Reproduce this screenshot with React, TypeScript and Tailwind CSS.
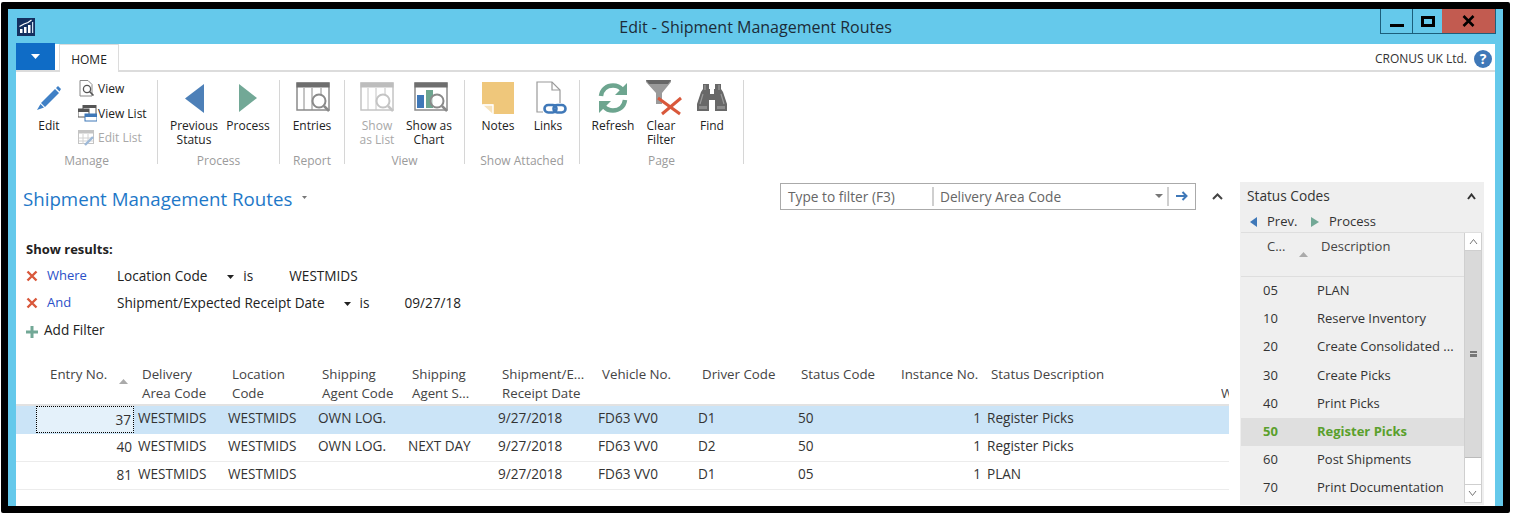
import type { ReactNode } from "react";

const font = { fontFamily: '"Open Sans", "Noto Sans", sans-serif' };

function Tri({ dir, color, w, h }: { dir: "l" | "r" | "d" | "u"; color: string; w: number; h: number }) {
  const pts = { l: `0,${h / 2} ${w},0 ${w},${h}`, r: `0,0 ${w},${h / 2} 0,${h}`, d: `0,0 ${w},0 ${w / 2},${h}`, u: `0,${h} ${w},${h} ${w / 2},0` }[dir];
  return (
    <svg width={w} height={h} viewBox={`0 0 ${w} ${h}`} className="shrink-0">
      <polygon points={pts} fill={color} />
    </svg>
  );
}

function Chevron({ w = 11, color = "#444", sw = 2 }: { w?: number; color?: string; sw?: number }) {
  return (
    <svg width={w} height={7} viewBox={`0 0 ${w} 7`} className="shrink-0">
      <polyline points={`1,6 ${w / 2},1.5 ${w - 1},6`} fill="none" stroke={color} strokeWidth={sw} />
    </svg>
  );
}

function RedX({ size = 12 }: { size?: number }) {
  return (
    <svg width={size} height={size} viewBox="0 0 12 12" className="shrink-0 -mt-[2px]">
      <path d="M1.5 1.5 10.5 10.5M10.5 1.5 1.5 10.5" stroke="#d9583b" strokeWidth="2.4" />
    </svg>
  );
}

function TableIcon({ faded, chart }: { faded?: boolean; chart?: boolean }) {
  const c = faded ? "#c4c4c4" : "#8a8a8a";
  const top = faded ? "#bdbdbd" : "#6e6e6e";
  return (
    <svg width="36" height="32" viewBox="0 0 36 32">
      <rect x="1" y="1" width="32" height="27" fill="#fff" stroke={c} strokeWidth="1.5" />
      <rect x="0.5" y="0.5" width="33" height="5" fill={top} />
      {!chart && <path d="M8 6v22M16 6v22M25 6v6" stroke={c} strokeWidth="1" />}
      {chart && <rect x="3" y="13" width="7" height="13" fill="#3f78b8" />}
      {chart && <rect x="12" y="8" width="7" height="18" fill="#6da58f" />}
      <circle cx="23" cy="19" r="6.5" fill="#fff" fillOpacity="0.7" stroke={c} strokeWidth="2" />
      <path d="M28 24 33 29" stroke={c} strokeWidth="2.5" />
    </svg>
  );
}

function NoteIcon() {
  return (
    <svg width="33" height="33" viewBox="0 0 33 33">
      <path d="M0 0H32V32H11V22H0Z" fill="#efc77b" />
      <path d="M0 22H11V32Z" fill="#f7e3bd" />
      <path d="M1 23H11V32" fill="none" stroke="#fff" strokeWidth="1.5" />
    </svg>
  );
}

function LinkIcon() {
  return (
    <svg width="32" height="34" viewBox="0 0 32 34">
      <path d="M2 1H17L25 9V31H2Z" fill="#fff" stroke="#9a9a9a" strokeWidth="1.2" />
      <path d="M17 1V9H25" fill="none" stroke="#9a9a9a" strokeWidth="1.2" />
      <rect x="8" y="22" width="24" height="11" fill="#fff" />
      <rect x="9.5" y="24" width="12" height="7.5" rx="3.7" fill="none" stroke="#3f78b8" strokeWidth="2.6" />
      <rect x="18.5" y="24" width="12" height="7.5" rx="3.7" fill="none" stroke="#3f78b8" strokeWidth="2.6" />
    </svg>
  );
}

function RefreshIcon() {
  return (
    <svg width="32" height="32" viewBox="0 0 32 32">
      <path d="M4 14C5 7 10 3.5 16 3.5c4 0 7 1.5 9 4" fill="none" stroke="#6da58f" strokeWidth="4.5" />
      <polygon points="30,1 30,13 18,13" fill="#6da58f" />
      <path d="M28 18C27 25 22 28.5 16 28.5c-4 0-7-1.5-9-4" fill="none" stroke="#6da58f" strokeWidth="4.5" />
      <polygon points="2,31 2,19 14,19" fill="#6da58f" />
    </svg>
  );
}

function FunnelIcon() {
  return (
    <svg width="36" height="36" viewBox="0 0 36 36">
      <path d="M0 0H25V2L16 13V24H10V13L0 2Z" fill="#9a9a9a" />
      <path d="M0 0H25L22 4H3Z" fill="#666" />
      <path d="M12 18 34 34" stroke="#d9583b" strokeWidth="3" />
      <path d="M35 18 16 34" stroke="#d9583b" strokeWidth="3" />
    </svg>
  );
}

function BinocularIcon() {
  return (
    <svg width="30" height="28" viewBox="0 0 30 28">
      <path d="M6 0H12V5H13V10H17V5H18V0H24V5L26 8L30 20V27H18V16H12V27H0V20L4 8L6 5Z" fill="#686868" />
      <path d="M8 1V6M22 1V6M6 10L3 20M24 10L27 20" stroke="#9a9a9a" strokeWidth="1.2" />
      <path d="M2 22H10V25H2ZM20 22H28V25H20Z" fill="#8c8c8c" />
    </svg>
  );
}

function PencilIcon() {
  return (
    <svg width="26" height="26" viewBox="0 0 26 26">
      <path d="M5 18 19 4 23 8 9 22Z" fill="#3f80c6" />
      <path d="M20 3 22 1 25 4 23.5 6.5Z" fill="#3f80c6" />
      <path d="M4.5 19 8 22.5 1 25Z" fill="#3f80c6" />
    </svg>
  );
}

function ViewIcon() {
  return (
    <svg width="16" height="17" viewBox="0 0 16 17">
      <path d="M1 .5H9L13 4.5V16H1Z" fill="#fff" stroke="#888" />
      <circle cx="8" cy="9" r="3.6" fill="#fff" stroke="#555" strokeWidth="1.3" />
      <path d="M10.5 11.5 14.5 15.5" stroke="#555" strokeWidth="1.6" />
    </svg>
  );
}

function ViewListIcon() {
  return (
    <svg width="19" height="17" viewBox="0 0 19 17">
      <rect x="5" y="0" width="13" height="10" fill="#fff" stroke="#555" />
      <rect x="5" y="0" width="13" height="3" fill="#555" />
      <rect x="0" y="4" width="11" height="8" fill="#fff" stroke="#555" />
      <rect x="0" y="4" width="11" height="3" fill="#555" />
      <rect x="7" y="9" width="12" height="7" fill="#fff" stroke="#3f78b8" />
      <rect x="7" y="9" width="12" height="3" fill="#3f78b8" />
    </svg>
  );
}

function EditListIcon() {
  return (
    <svg width="17" height="16" viewBox="0 0 17 16">
      <rect x=".5" y=".5" width="15" height="13" fill="#fff" stroke="#c4c4c4" />
      <rect x=".5" y=".5" width="15" height="3" fill="#c4c4c4" />
      <path d="M5 4v10M10 4v10M1 8h14M1 11h14" stroke="#d2d2d2" />
      <path d="M7 15 15 7" stroke="#9db9d8" strokeWidth="2.4" />
    </svg>
  );
}

function AppIcon() {
  return (
    <svg width="18" height="18" viewBox="0 0 18 18" className="shrink-0">
      <rect width="18" height="18" fill="#14305f" />
      <path d="M3 15v-4h2.5v4ZM7 15V9h2.5v6ZM11 15V7h2.5v8Z" fill="#fff" />
      <path d="M15 15V4h1.2v11Z" fill="#cfe0ef" />
      <path d="M2.5 8.5 7 6l4-1.5 3.5-2.5" fill="none" stroke="#fff" strokeWidth="1.2" />
    </svg>
  );
}

function BigButton({ w, icon, lines, faded, iconClass = "" }: { w: number; icon: ReactNode; lines: string[]; faded?: boolean; iconClass?: string }) {
  return (
    <div className="flex flex-col items-center shrink-0" style={{ width: w }}>
      <div className={`h-[36px] w-full flex items-center justify-center ${iconClass}`}>{icon}</div>
      <div className={`mt-[3px] text-center text-[12px] leading-[14px] whitespace-nowrap ${faded ? "text-[#a8a8a8]" : "text-[#222]"}`}>
        {lines.map((l) => (
          <div key={l}>{l}</div>
        ))}
      </div>
    </div>
  );
}

function Group({ w, pl, label, children }: { w: number; pl: number; label: string; children: ReactNode }) {
  return (
    <div className="h-[84px] flex flex-col border-r border-[#d6d6d6] shrink-0" style={{ width: w }}>
      <div className="h-[74px] flex" style={{ paddingLeft: pl }}>
        {children}
      </div>
      <div className="h-[10px] text-center text-[12px] leading-[14px] text-[#9b9b9b]">{label}</div>
    </div>
  );
}

const headers: { w: number; lines: string[]; pl: number }[] = [
  { w: 90, lines: ["Delivery", "Area Code"], pl: 8 },
  { w: 90, lines: ["Location", "Code"], pl: 8 },
  { w: 90, lines: ["Shipping", "Agent Code"], pl: 8 },
  { w: 90, lines: ["Shipping", "Agent S..."], pl: 8 },
  { w: 100, lines: ["Shipment/E...", "Receipt Date"], pl: 8 },
  { w: 100, lines: ["Vehicle No."], pl: 8 },
  { w: 100, lines: ["Driver Code"], pl: 8 },
  { w: 100, lines: ["Status Code"], pl: 7 },
  { w: 89, lines: ["Instance No."], pl: 7 },
  { w: 238, lines: ["Status Description"], pl: 8 },
];

const rows = [
  { no: "37", agent: "OWN LOG.", service: "", driver: "D1", status: "50", desc: "Register Picks", selected: true },
  { no: "40", agent: "OWN LOG.", service: "NEXT DAY", driver: "D2", status: "50", desc: "Register Picks" },
  { no: "81", agent: "", service: "", driver: "D1", status: "05", desc: "PLAN" },
];

const statusCodes = [
  ["05", "PLAN"],
  ["10", "Reserve Inventory"],
  ["20", "Create Consolidated ..."],
  ["30", "Create Picks"],
  ["40", "Print Picks"],
  ["50", "Register Picks"],
  ["60", "Post Shipments"],
  ["70", "Print Documentation"],
];

function Cell({ w, children }: { w: number; children?: ReactNode }) {
  return (
    <div className="pl-[4px] pb-[4px] shrink-0 whitespace-nowrap" style={{ width: w }}>
      {children}
    </div>
  );
}

export default function App() {
  return (
    <div className="w-[1513px] h-[517px] bg-white overflow-hidden pt-[2px] pl-px" style={font}>
      <div className="w-[1509px] h-[511px] border-[7px] border-black bg-[#65c9eb] flex flex-col rounded-[2px]">
        {/* Title bar */}
        <div className="h-[35px] flex shrink-0">
          <div className="pl-[9px] pt-[9px] w-[400px]">
            <AppIcon />
          </div>
          <div className="flex-1 text-center text-[16px] leading-[36px] text-[#1c2c38]">Edit - Shipment Management Routes</div>
          <div className="w-[400px] flex justify-end pr-[7px]">
            <div className="flex h-[25px] border border-t-0 border-[#1c5f7c]">
              <div className="w-[32px] border-r border-[#1c5f7c] flex items-end justify-center pb-[6px]">
                <div className="w-[14px] h-[3px] bg-black" />
              </div>
              <div className="w-[29px] flex justify-center pt-[7px]">
                <div className="w-[14px] h-[11px] border-[3px] border-black" />
              </div>
              <div className="w-[53px] bg-[#c25b50] flex items-center justify-center">
                <svg width="13" height="12" viewBox="0 0 13 12">
                  <path d="M1.5 1 11.5 11M11.5 1 1.5 11" stroke="#000" strokeWidth="2.6" />
                </svg>
              </div>
            </div>
          </div>
        </div>

        <div className="ml-[8px] mr-[8px] flex-1 bg-white flex flex-col min-h-0 text-[#333]">
          {/* Tabs */}
          <div className="h-[28px] flex items-end border-b-2 border-[#dcdcdc] pr-[3px] shrink-0">
            <div className="w-[39px] h-[27px] bg-[#0f6cc6] flex items-center justify-center">
              <Tri dir="d" color="#fff" w={9} h={5} />
            </div>
            <div className="ml-[4px] w-[60px] h-[28px] -mb-[2px] bg-white border border-b-0 border-[#dcdcdc] text-center text-[12px] leading-[29px] text-[#222]">HOME</div>
            <div className="flex-1" />
            <div className="h-[26px] pt-[4px] flex items-center gap-[7px] text-[12px] text-[#333]">
              <span>CRONUS UK Ltd.</span>
              <div className="w-[18px] h-[18px] rounded-full bg-[#3f78b8] text-white text-center text-[14px] leading-[18px] font-bold">?</div>
            </div>
          </div>

          {/* Ribbon */}
          <div className="h-[98px] flex pt-[8px] shrink-0">
            <Group w={142} pl={4} label="Manage">
              <BigButton w={58} icon={<PencilIcon />} lines={["Edit"]} />
              <div className="flex flex-col gap-[8px] text-[12px] leading-[16px]">
                <div className="flex items-center gap-[3px] text-[#222]">
                  <div className="w-[17px] flex justify-center"><ViewIcon /></div>
                  View
                </div>
                <div className="flex items-center gap-[1px] text-[#222]">
                  <ViewListIcon />
                  View List
                </div>
                <div className="flex items-center gap-[3px] text-[#a8a8a8]">
                  <EditListIcon />
                  Edit List
                </div>
              </div>
            </Group>
            <Group w={122} pl={9} label="Process">
              <BigButton w={54} icon={<Tri dir="l" color="#4d80b8" w={19} h={29} />} lines={["Previous", "Status"]} />
              <BigButton w={54} icon={<Tri dir="r" color="#72a896" w={18} h={28} />} lines={["Process"]} />
            </Group>
            <Group w={65} pl={1} label="Report">
              <BigButton w={62} iconClass="pl-[4px]" icon={<TableIcon />} lines={["Entries"]} />
            </Group>
            <Group w={120} pl={6} label="View">
              <BigButton w={52} iconClass="pl-[2px]" faded icon={<TableIcon faded />} lines={["Show", "as List"]} />
              <BigButton w={52} iconClass="pl-[6px]" icon={<TableIcon chart />} lines={["Show as", "Chart"]} />
            </Group>
            <Group w={115} pl={8} label="Show Attached">
              <BigButton w={50} icon={<NoteIcon />} lines={["Notes"]} />
              <BigButton w={50} iconClass="pl-[6px]" icon={<LinkIcon />} lines={["Links"]} />
            </Group>
            <Group w={164} pl={9} label="Page">
              <BigButton w={48} icon={<RefreshIcon />} lines={["Refresh"]} />
              <BigButton w={48} iconClass="pl-[6px]" icon={<FunnelIcon />} lines={["Clear", "Filter"]} />
              <BigButton w={54} icon={<BinocularIcon />} lines={["Find"]} />
            </Group>
          </div>

          {/* Body */}
          <div className="flex-1 min-h-0 flex pt-[12px] overflow-hidden">
            <div className="w-[1213px] shrink-0 pt-px">
              <div className="h-[26px] flex items-center">
                <div className="ml-[7px] mt-[6px] text-[18.7px] leading-[26px] text-[#1e78c8] whitespace-nowrap">Shipment Management Routes</div>
                <div className="ml-[10px] mt-[3px]"><Tri dir="d" color="#777" w={5} h={3} /></div>
                <div className="flex-1" />
                <div className="w-[416px] h-[27px] border border-[#aaa] flex items-center text-[13.7px] text-[#666]">
                  <div className="w-[153px] pl-[7px] border-r-2 border-[#cfcfcf] h-[19px] leading-[19px] shrink-0">Type to filter (F3)</div>
                  <div className="flex-1 pl-[6px] leading-[19px]">Delivery Area Code</div>
                  <div className="mr-[4px]"><Tri dir="d" color="#777" w={8} h={4} /></div>
                  <div className="h-[19px] border-l-2 border-[#cfcfcf] w-[28px] flex items-center justify-center">
                    <svg width="12" height="10" viewBox="0 0 12 10">
                      <path d="M0 5H10M6.5 1 10.5 5 6.5 9" fill="none" stroke="#3f78b8" strokeWidth="2" />
                    </svg>
                  </div>
                </div>
                <div className="w-[33px] flex justify-end pr-[6px]"><Chevron w={11} /></div>
              </div>

              <div className="mt-[30px] ml-[10px] text-[13px] leading-[20px] font-bold text-[#222]">Show results:</div>

              <div className="mt-[4px] ml-[10px] text-[13.6px] text-[#222]">
                <div className="h-[27px] flex items-center">
                  <RedX />
                  <span className="w-[70px] ml-[9px] text-[13px] text-[#2a50c8] -mt-[1px]">Where</span>
                  <span>Location Code</span>
                  <div className="ml-[20px]"><Tri dir="d" color="#222" w={7} h={4} /></div>
                  <span className="ml-[9px]">is</span>
                  <span className="ml-[36px]">WESTMIDS</span>
                </div>
                <div className="h-[27px] flex items-center">
                  <RedX />
                  <span className="w-[70px] ml-[9px] text-[13px] text-[#2a50c8] -mt-[1px]">And</span>
                  <span>Shipment/Expected Receipt Date</span>
                  <div className="ml-[19px]"><Tri dir="d" color="#222" w={7} h={4} /></div>
                  <span className="ml-[9px]">is</span>
                  <span className="ml-[35px]">09/27/18</span>
                </div>
                <div className="h-[27px] flex items-center gap-[6px]">
                  <svg width="12" height="12" viewBox="0 0 12 12" className="mt-[2px]">
                    <path d="M6 0V12M0 6H12" stroke="#72a896" strokeWidth="3" />
                  </svg>
                  Add Filter
                </div>
              </div>

              {/* Grid */}
              <div className="mt-[21px] text-[13.3px] leading-[19px] text-[#444] border-b-2 border-[#e2e2e2] h-[41px] flex overflow-hidden">
                <div className="w-[118px] shrink-0 flex pl-[34px]">
                  <span className="whitespace-nowrap">Entry No.</span>
                  <div className="ml-[12px] mt-[14px]"><Tri dir="u" color="#aaa" w={9} h={5} /></div>
                </div>
                {headers.map((h) => (
                  <div key={h.lines[0] + h.lines[1]} className="shrink-0 whitespace-nowrap" style={{ width: h.w, paddingLeft: h.pl }}>
                    {h.lines.map((l) => (
                      <div key={l}>{l}</div>
                    ))}
                  </div>
                ))}
                <div className="w-[8px] overflow-hidden mt-[19px]">W</div>
              </div>
              {rows.map((r) => (
                <div
                  key={r.no}
                  className={`h-[28px] flex items-center text-[13.6px] leading-[26px] text-[#333] border-b ${r.selected ? "bg-[#cbe4f7] border-transparent" : "border-[#ececec]"}`}
                >
                  <div className="w-[20px] shrink-0" />
                  <div className={`w-[98px] h-full shrink-0 text-right pr-[2px] leading-[25px] ${r.selected ? "bg-[#e4f1fa] border border-dotted border-black" : ""}`}>{r.no}</div>
                  <Cell w={90}>WESTMIDS</Cell>
                  <Cell w={90}>WESTMIDS</Cell>
                  <Cell w={90}>{r.agent}</Cell>
                  <Cell w={90}>{r.service}</Cell>
                  <Cell w={100}>9/27/2018</Cell>
                  <Cell w={100}>FD63 VV0</Cell>
                  <Cell w={100}>{r.driver}</Cell>
                  <Cell w={100}>{r.status}</Cell>
                  <div className="w-[89px] pb-[4px] shrink-0 text-right pr-[2px]">1</div>
                  <Cell w={238}>{r.desc}</Cell>
                </div>
              ))}
            </div>

            {/* Status Codes factbox */}
            <div className="ml-[11px] w-[244px] h-[323px] bg-[#efefef] flex flex-col shrink-0 text-[13px] text-[#333]">
              <div className="h-[28px] flex items-center pl-[7px] pr-[8px] justify-between shrink-0">
                <span className="text-[13.7px] text-[#333]">Status Codes</span>
                <Chevron w={9} color="#333" />
              </div>
              <div className="h-[22px] pt-px flex items-center pl-[10px] shrink-0">
                <Tri dir="l" color="#3f78b8" w={7} h={10} />
                <span className="ml-[10px] w-[44px]">Prev.</span>
                <Tri dir="r" color="#72a896" w={8} h={10} />
                <span className="ml-[10px]">Process</span>
              </div>
              <div className="ml-px mr-[2px] h-[271px] border-t border-[#dedede] flex min-h-0">
                <div className="flex-1 min-w-0">
                  <div className="h-[44px] border-b border-[#dedede] flex leading-[19px] pt-[4px] text-[#444]">
                    <span className="ml-[26px] w-[32px]">C...</span>
                    <div className="mt-[15px]"><Tri dir="u" color="#aaa" w={9} h={5} /></div>
                    <span className="ml-[13px]">Description</span>
                  </div>
                  {statusCodes.map(([code, desc]) => (
                    <div
                      key={code}
                      className={`h-[28.2px] leading-[26px] flex whitespace-nowrap ${code === "50" ? "bg-[#dfdfdf] font-bold text-[#5aa02c]" : ""}`}
                    >
                      <span className="ml-[22px] w-[54px] shrink-0">{code}</span>
                      <span>{desc}</span>
                    </div>
                  ))}
                </div>
                <div className="w-[18px] flex flex-col shrink-0 bg-white border-x border-[#cfcfcf]">
                  <div className="h-[18px] flex items-center justify-center border-b border-[#cfcfcf]"><Chevron w={9} color="#777" sw={1} /></div>
                  <div className="h-[207px] bg-[#d9d9d9] border-b border-[#bbb] flex items-center justify-center">
                    <div className="w-[7px] h-[6px] border-y-2 border-[#777] flex items-center"><div className="w-full h-px bg-[#777]" /></div>
                  </div>
                  <div className="flex-1" />
                  <div className="h-[19px] flex items-center justify-center border-y border-[#cfcfcf] rotate-180"><Chevron w={9} color="#777" sw={1} /></div>
                </div>
              </div>
            </div>
          </div>
        </div>
      </div>
    </div>
  );
}
